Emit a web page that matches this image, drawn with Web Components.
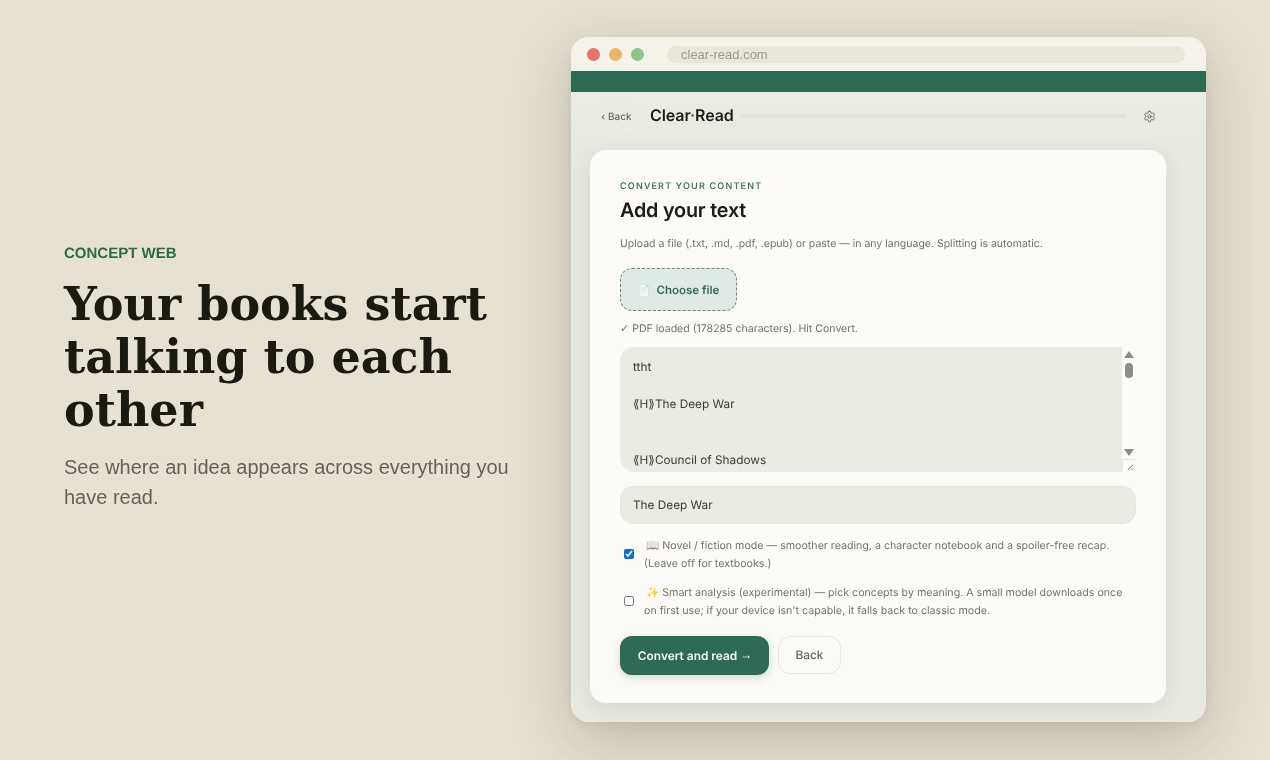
<!DOCTYPE html>
<html lang="en"><head><meta charset="utf-8"><title>Clear·Read</title>
<style>
html,body{margin:0;height:760px;overflow:hidden;background:#e6e1d3}
</style></head><body>
<promo-page>
  <promo-copy slot="copy"></promo-copy>
  <browser-window slot="window">
    <app-topbar></app-topbar>
    <convert-card></convert-card>
  </browser-window>
</promo-page>
<script>
const UI='"Inter","Noto Sans",sans-serif';
const TR='text-rendering:geometricPrecision;';
function def(name,html){
  customElements.define(name,class extends HTMLElement{
    constructor(){super();this.attachShadow({mode:'open'}).innerHTML=html;}
  });
}
def('promo-page',`<style>
:host{display:flex;width:1270px;height:760px;box-sizing:border-box;padding:37px 64px 38px 64px;justify-content:space-between;align-items:stretch;will-change:opacity}
.l{display:flex;align-items:center;width:460px;box-sizing:border-box;padding-bottom:4px}
.r{display:flex}
</style><div class="l"><slot name="copy"></slot></div><div class="r"><slot name="window"></slot></div>`);
def('promo-copy',`<style>
:host{display:block;width:460px}
.k{font:700 15px/20px "Liberation Sans",Arial,sans-serif;${TR}color:#2a6a47;margin:0 0 14px;}
h1{margin:0 0 15px;font:700 46px/53px "DejaVu Serif",serif;color:#1a1a10;width:460px;letter-spacing:0}
p{margin:0;font:400 20px/30px "Liberation Sans",Arial,sans-serif;color:#64625a}
</style><div class="k">CONCEPT WEB</div><h1>Your books start talking to each other</h1><p>See where an idea appears across everything you have read.</p>`);
def('browser-window',`<style>
:host{display:flex;flex-direction:column;width:635px;height:685px;border-radius:18px;overflow:hidden;background:linear-gradient(#eeede6,#e9e8e1 120px);box-shadow:0 18px 60px rgba(60,50,30,.24),0 4px 14px rgba(60,50,30,.05)}
.bar{height:34px;flex:none;background:#f5f2ea;display:flex;align-items:center;padding:0 21px 0 16px;gap:9px;box-sizing:border-box}
i{width:13px;height:13px;border-radius:50%;flex:none;display:block}
.u{flex:1;height:17px;margin-left:14px;background:#e9e6dc;border-radius:9px;padding-left:14px;font:400 13px/17px "Liberation Sans",Arial,sans-serif;color:#9a9890}
.g{height:21px;flex:none;background:#2e6b55}
.b{flex:1;padding:9px 40px 19px 19px;display:flex;flex-direction:column}
</style><div class="bar"><i style="background:#e8736c"></i><i style="background:#ecb765"></i><i style="background:#8fc48a"></i><div class="u">clear-read.com</div></div><div class="g"></div><div class="b"><slot></slot></div>`);
def('app-topbar',`<style>
:host{display:flex;align-items:center;height:30px;margin-bottom:19px;flex:none;${TR}}
.back{height:28px;width:52px;box-sizing:border-box;border:1px solid #efeee8;border-radius:14px;font:500 10px/28px ${UI};color:#6b6a62;text-align:center;white-space:nowrap;margin-right:8px;padding-left:1px}
.logo{font:600 16px/30px ${UI};color:#1c1c18;letter-spacing:-.1px;white-space:nowrap;padding-bottom:2px}
.logo b{color:#2e6b55;font-weight:600}
.p{flex:1;height:4px;background:#e3e2da;border-radius:2px;margin:0 6px}
svg{flex:none;margin:0 10px 0 11px;display:block}
</style><div class="back">‹ Back</div><div class="logo">Clear<b>·</b>Read</div><div class="p"></div>
<svg width="13" height="13" viewBox="0 0 24 24" fill="none" stroke="#66655e" stroke-width="1.8" stroke-linecap="round" stroke-linejoin="round"><path d="M12.22 2h-.44a2 2 0 0 0-2 2v.18a2 2 0 0 1-1 1.73l-.43.25a2 2 0 0 1-2 0l-.15-.08a2 2 0 0 0-2.73.73l-.22.38a2 2 0 0 0 .73 2.73l.15.1a2 2 0 0 1 1 1.72v.51a2 2 0 0 1-1 1.74l-.15.09a2 2 0 0 0-.73 2.73l.22.38a2 2 0 0 0 2.73.73l.15-.08a2 2 0 0 1 2 0l.43.25a2 2 0 0 1 1 1.73V20a2 2 0 0 0 2 2h.44a2 2 0 0 0 2-2v-.18a2 2 0 0 1 1-1.73l.43-.25a2 2 0 0 1 2 0l.15.08a2 2 0 0 0 2.73-.73l.22-.39a2 2 0 0 0-.73-2.73l-.15-.08a2 2 0 0 1-1-1.74v-.5a2 2 0 0 1 1-1.74l.15-.09a2 2 0 0 0 .73-2.73l-.22-.38a2 2 0 0 0-2.73-.73l-.15.08a2 2 0 0 1-2 0l-.43-.25a2 2 0 0 1-1-1.73V4a2 2 0 0 0-2-2z"/><circle cx="12" cy="12" r="3"/></svg>`);
def('text-area-box',`<style>
:host{display:flex;height:125px;border-radius:14px 4px 4px 14px;overflow:hidden;background:#ebeae3;flex:none}
.t{flex:1;padding:11px 13px;font:400 11.8px/18.6px ${UI};color:#3c3c36;white-space:pre;overflow:hidden;${TR}}
.s{width:14px;background:#fcfbf7;position:relative;flex:none;display:flex;flex-direction:column;align-items:center}
.th{width:8px;height:15px;border-radius:4px;background:#8d8d8a;margin-top:3px}
.sp{flex:1}
.c{width:14px;height:13px;box-sizing:border-box;border-left:1px solid #e7e6e1;border-top:1px solid #e7e6e1;display:block}
svg{display:block}
</style><div class="t"><slot></slot></div><div class="s">
<svg width="10" height="10" viewBox="0 0 10 10" style="margin-top:3px"><path d="M5 1 10 8H0z" fill="#8a8a88"/></svg>
<div class="th"></div><div class="sp"></div>
<svg width="10" height="8" viewBox="0 0 10 8" style="margin-bottom:2px"><path d="M0 0h10L5 7z" fill="#8a8a88"/></svg>
<svg class="c" viewBox="0 0 14 13"><path d="M5 11 11 5M9 11l2-2" stroke="#666" stroke-width="1" fill="none"/></svg></div>`);
def('check-row',`<style>
:host{display:flex;align-items:center;gap:9px;padding-left:4px}
input{width:10px;height:10px;flex:none;accent-color:#0b6fd6;margin:0 1px 3px 0}
div{font:400 10.65px/18px ${UI};color:#73726a;text-indent:2px;padding-right:10px;${TR}}
</style><input type="checkbox"><div><slot></slot></div>`);
def('convert-card',`<style>
:host{display:block;background:#fcfbf7;border-radius:16px;box-shadow:0 4px 20px rgba(60,55,40,.1);padding:30px 30px 28px;height:553px;box-sizing:border-box;width:576px;${TR}}
.e{font:500 9px/13px ${UI};letter-spacing:1.2px;color:#2e6b55;margin-bottom:2px}
h2{margin:0 0 10px;font:600 19.8px/30px ${UI};color:#1c1c18;letter-spacing:-.2px}
.d{font:400 10.5px/18px ${UI};color:#73726a;margin:0 0 15px}
.f{display:flex;align-items:center;justify-content:center;gap:5px;width:117px;height:43px;box-sizing:border-box;border:1px dashed #6a8a7c;border-radius:12px;background:#deeae3;color:#2e6b55;font:600 11.5px/16px ${UI};margin-bottom:11px}
.f span{opacity:.6;font-size:11px}
.ok{font:400 10.55px/14px ${UI};color:#73726a;margin-bottom:11px}
.ok b{font:400 11px/14px "DejaVu Sans",sans-serif}
.in{height:38px;margin-top:14px;box-sizing:border-box;border:1px solid #e7e6df;border-radius:13px;background:#ebeae3;padding:0 12px;font:400 11.8px/36px ${UI};color:#3c3c36}
.rows{display:flex;flex-direction:column;gap:11px;margin-top:13px}
.btns{display:flex;gap:9px;margin-top:16px;align-items:flex-start}
.p{width:149px;height:39px;padding-left:1px;box-sizing:border-box;background:#2e6b55;border-radius:12px;color:#fcfbf7;font:600 11.9px/39px ${UI};text-align:center;box-shadow:0 3px 8px rgba(46,107,85,.22)}
.p b{font:400 12px/39px "Liberation Sans",sans-serif;position:relative;top:-1px}
.s{width:63px;height:38px;box-sizing:border-box;border:1px solid #e9e8e1;border-radius:12px;color:#66655e;font:500 11.8px/37px ${UI};text-align:center}
</style>
<div class="e">CONVERT YOUR CONTENT</div><h2>Add your text</h2>
<div class="d">Upload a file (.txt, .md, .pdf, .epub) or paste — in any language. Splitting is automatic.</div>
<div class="f"><span>📄</span>Choose file</div>
<div class="ok"><b>✓</b> PDF loaded (178285 characters). Hit Convert.</div>
<text-area-box>ttht

⟪H⟫The Deep War


⟪H⟫Council of Shadows</text-area-box>
<div class="in">The Deep War</div>
<div class="rows">
<check-row id="a">📖 Novel / fiction mode — smoother reading, a character notebook and a spoiler-free recap. (Leave off for textbooks.)</check-row>
<check-row>✨ Smart analysis (experimental) — pick concepts by meaning. A small model downloads once on first use; if your device isn't capable, it falls back to classic mode.</check-row>
</div>
<div class="btns"><div class="p">Convert and read <b>→</b></div><div class="s">Back</div></div>`);
document.querySelector('convert-card').shadowRoot.querySelector('#a').shadowRoot.querySelector('input').checked=true;
</script>
</body></html>
